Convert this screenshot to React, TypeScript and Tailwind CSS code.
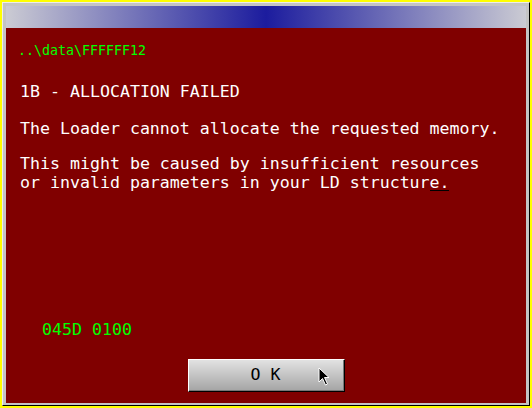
import React from "react";

export default function App() {
  const mono = { fontFamily: '"DejaVu Sans Mono", "Liberation Mono", monospace' };
  return (
    <div className="w-[532px] h-[408px] bg-[#ffff00] pt-[2px] pl-[2px]" style={mono}>
      <div className="w-[528px] h-[404px] bg-[#c4c4c4] border border-t-[#ececec] border-l-[#ececec] border-r-black border-b-black pt-[3px] pl-[3px] pr-[3px] pb-[2px] flex flex-col">
        <div className="h-[22px] shrink-0 bg-[linear-gradient(to_right,#cbcbd3,#1c1c9e_50%,#cbcbd3)]" />
        <div className="flex-1 bg-[#800000] flex flex-col">
          <div className="pt-[15px] pl-[12px] text-[13.3px] leading-[16px] text-[#00ff00]">
            ..\data\FFFFFF12
          </div>
          <div className="pl-[14px] text-[16.6px] leading-[19px] text-white">
            <div className="mt-[23px]">1B - ALLOCATION FAILED</div>
            <div className="mt-[18px]">The Loader cannot allocate the requested memory.</div>
            <div className="mt-[16px]">This might be caused by insufficient resources</div>
            <div>
              or invalid parameters in your LD structur
              <span className="relative">
                e.
                <span className="absolute left-0 top-[17px] w-[19px] h-[1px] bg-black" />
              </span>
            </div>
          </div>
          <div className="mt-[128px] pl-[36px] text-[16.6px] leading-[19px] text-[#00ff00]">045D 0100</div>
          <div className="mt-[20px] flex justify-center">
            <div className="relative w-[157px] h-[33px] border border-t-white border-l-white border-r-black border-b-black bg-[linear-gradient(to_bottom,#e2e2e2,#a4a4a4)] shadow-[inset_-1px_-1px_0_#777]">
              <div className="h-full flex items-center justify-center text-[16.6px] text-black pr-[1px]">O K</div>
              <svg className="absolute left-[129px] top-[7px]" width="13" height="20" viewBox="0 0 13 20">
                <path d="M1 1 L1 15 L4.5 11.5 L7.5 18 L9.5 17 L6.5 10.5 L11 10.5 Z" fill="black" stroke="white" strokeWidth="1" />
              </svg>
            </div>
          </div>
        </div>
      </div>
    </div>
  );
}
